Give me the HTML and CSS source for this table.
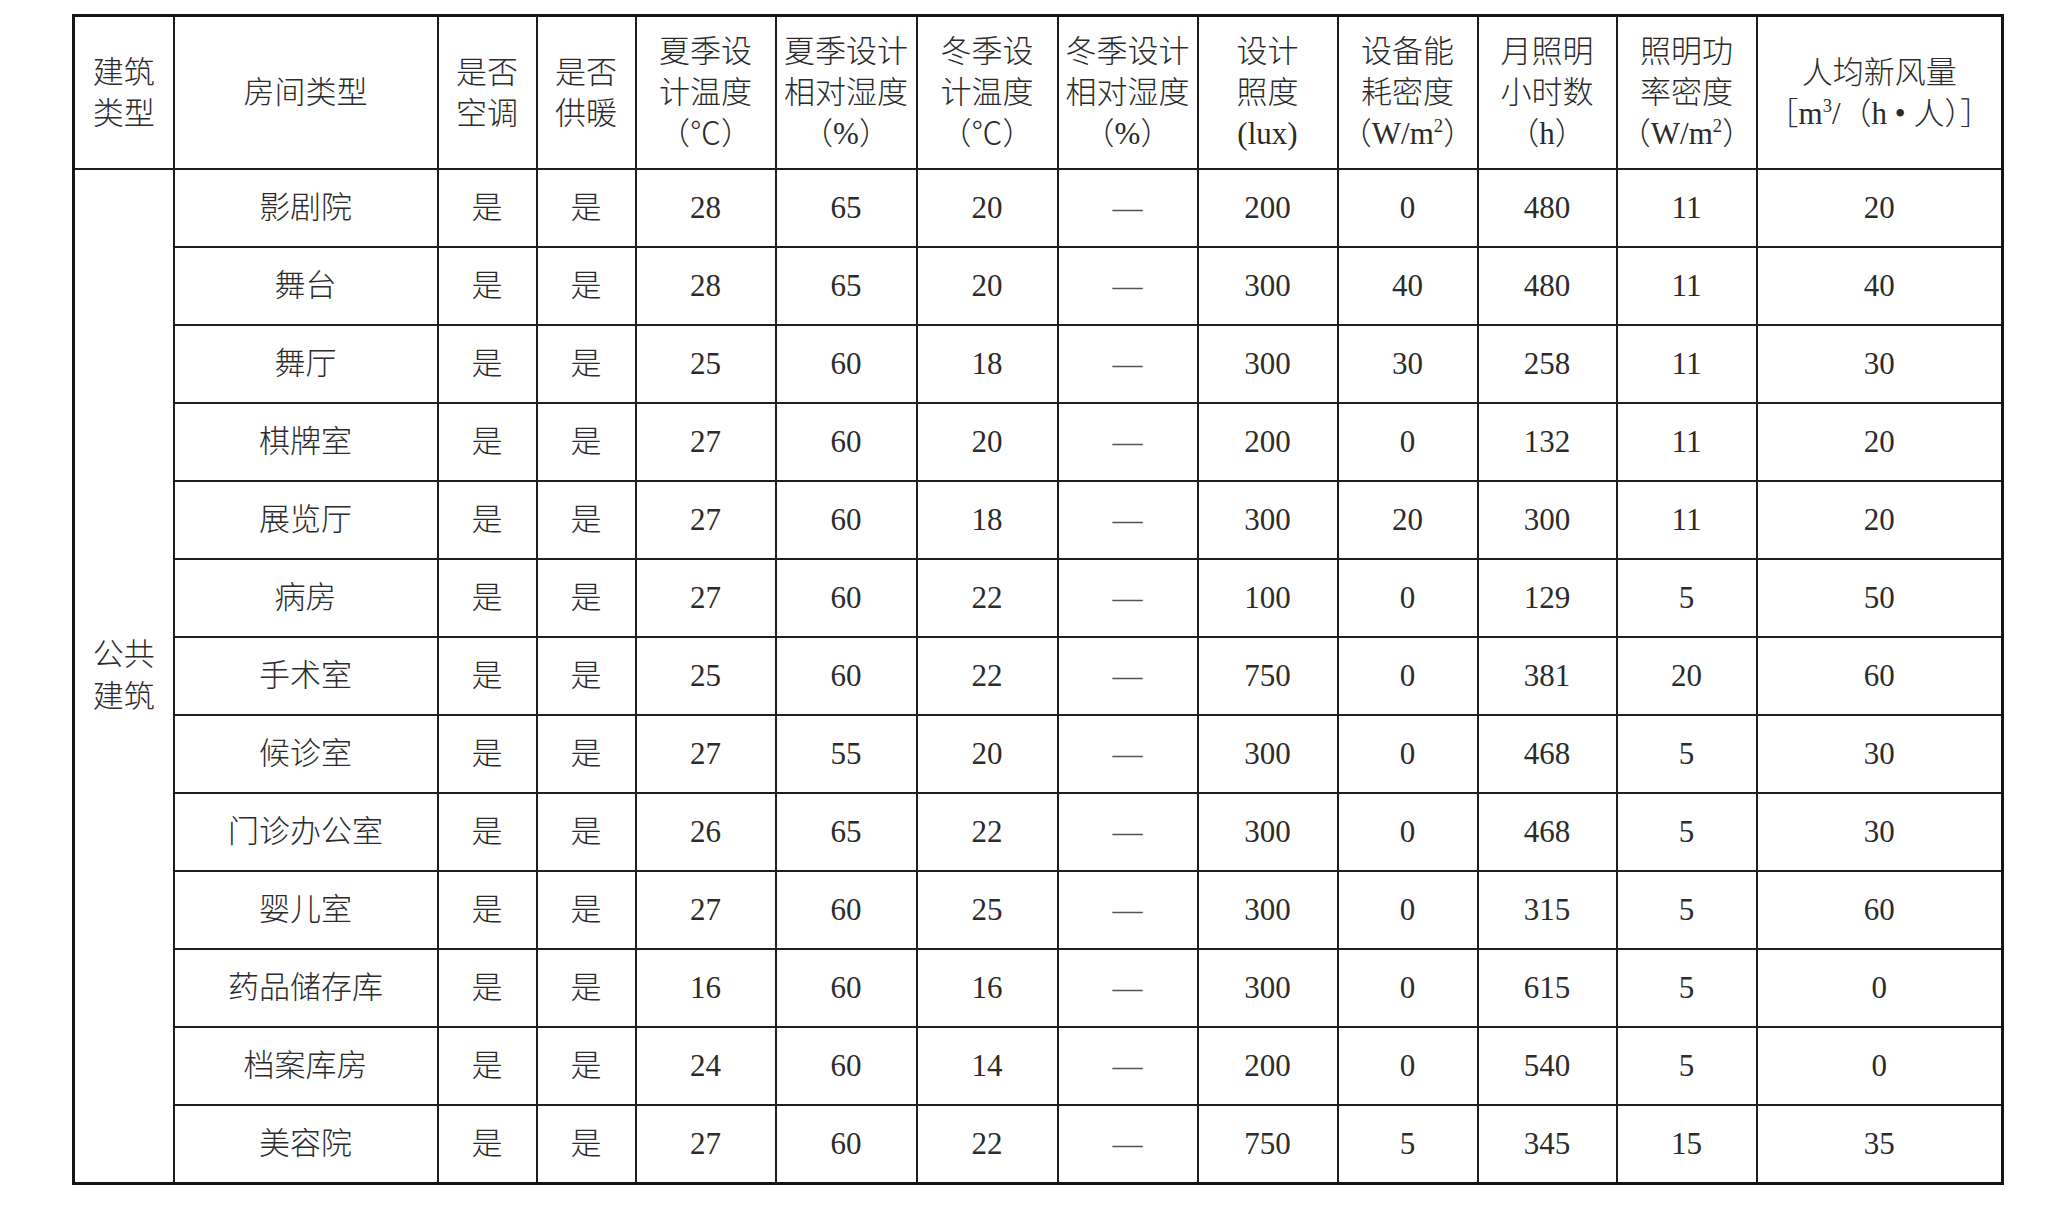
FILE: index.html
```html
<!DOCTYPE html>
<html lang="zh-CN">
<head>
<meta charset="utf-8">
<title>房间参数表</title>
<link rel="stylesheet" href="styles.css">
</head>
<body>
<div class="page">
<table class="grid">
<colgroup>
<col class="c-type"><col class="c-room"><col class="c-yn"><col class="c-yn"><col class="c-n140"><col class="c-n141"><col class="c-n141"><col class="c-n140"><col class="c-n140"><col class="c-n140"><col class="c-n139"><col class="c-n140"><col class="c-air">
</colgroup>
<thead>
<tr class="head">
<th>建筑<br>类型</th>
<th>房间类型</th>
<th>是否<br>空调</th>
<th>是否<br>供暖</th>
<th>夏季设<br>计温度<br>（℃）</th>
<th>夏季设计<br>相对湿度<br>（%）</th>
<th>冬季设<br>计温度<br>（℃）</th>
<th>冬季设计<br>相对湿度<br>（%）</th>
<th>设计<br>照度<br>(lux)</th>
<th>设备能<br>耗密度<br>（W/m<sup>2</sup>）</th>
<th>月照明<br>小时数<br>（h）</th>
<th>照明功<br>率密度<br>（W/m<sup>2</sup>）</th>
<th>人均新风量<br>［m<sup>3</sup>/（h • 人）］</th>
</tr>
</thead>
<tbody>
<tr><td rowspan="13" class="group">公共<br>建筑</td><td>影剧院</td><td>是</td><td>是</td><td>28</td><td>65</td><td>20</td><td class="dash">—</td><td>200</td><td>0</td><td>480</td><td>11</td><td>20</td></tr>
<tr><td>舞台</td><td>是</td><td>是</td><td>28</td><td>65</td><td>20</td><td class="dash">—</td><td>300</td><td>40</td><td>480</td><td>11</td><td>40</td></tr>
<tr><td>舞厅</td><td>是</td><td>是</td><td>25</td><td>60</td><td>18</td><td class="dash">—</td><td>300</td><td>30</td><td>258</td><td>11</td><td>30</td></tr>
<tr><td>棋牌室</td><td>是</td><td>是</td><td>27</td><td>60</td><td>20</td><td class="dash">—</td><td>200</td><td>0</td><td>132</td><td>11</td><td>20</td></tr>
<tr><td>展览厅</td><td>是</td><td>是</td><td>27</td><td>60</td><td>18</td><td class="dash">—</td><td>300</td><td>20</td><td>300</td><td>11</td><td>20</td></tr>
<tr><td>病房</td><td>是</td><td>是</td><td>27</td><td>60</td><td>22</td><td class="dash">—</td><td>100</td><td>0</td><td>129</td><td>5</td><td>50</td></tr>
<tr><td>手术室</td><td>是</td><td>是</td><td>25</td><td>60</td><td>22</td><td class="dash">—</td><td>750</td><td>0</td><td>381</td><td>20</td><td>60</td></tr>
<tr><td>候诊室</td><td>是</td><td>是</td><td>27</td><td>55</td><td>20</td><td class="dash">—</td><td>300</td><td>0</td><td>468</td><td>5</td><td>30</td></tr>
<tr><td>门诊办公室</td><td>是</td><td>是</td><td>26</td><td>65</td><td>22</td><td class="dash">—</td><td>300</td><td>0</td><td>468</td><td>5</td><td>30</td></tr>
<tr><td>婴儿室</td><td>是</td><td>是</td><td>27</td><td>60</td><td>25</td><td class="dash">—</td><td>300</td><td>0</td><td>315</td><td>5</td><td>60</td></tr>
<tr><td>药品储存库</td><td>是</td><td>是</td><td>16</td><td>60</td><td>16</td><td class="dash">—</td><td>300</td><td>0</td><td>615</td><td>5</td><td>0</td></tr>
<tr><td>档案库房</td><td>是</td><td>是</td><td>24</td><td>60</td><td>14</td><td class="dash">—</td><td>200</td><td>0</td><td>540</td><td>5</td><td>0</td></tr>
<tr><td>美容院</td><td>是</td><td>是</td><td>27</td><td>60</td><td>22</td><td class="dash">—</td><td>750</td><td>5</td><td>345</td><td>15</td><td>35</td></tr>
</tbody>
</table>
</div>
</body>
</html>
```

FILE: styles.css
```css
html, body {
  margin: 0;
  padding: 0;
  background: #ffffff;
}

.page {
  padding: 14px 0 0 72px;
}

.grid {
  border-collapse: collapse;
  table-layout: fixed;
  width: 1932px;
  border: 3px solid #151515;
  font-family: "Liberation Serif", "Noto Sans CJK SC", serif;
  color: #2b2b2b;
  font-weight: 300;
}

.c-type { width: 100px; }
.c-room { width: 264px; }
.c-yn { width: 99px; }
.c-n139 { width: 139px; }
.c-n140 { width: 140px; }
.c-n141 { width: 141px; }
.c-air { width: 246px; }

.grid th,
.grid td {
  border: 2px solid #1e1e1e;
  text-align: center;
  vertical-align: middle;
  padding: 0;
  white-space: nowrap;
}

.grid th {
  font-weight: 300;
  font-size: 31px;
  line-height: 41px;
  height: 151px;
  letter-spacing: 0;
}

.grid td {
  font-size: 31px;
  line-height: 40px;
  height: 76px;
}

.grid td.group {
  line-height: 42px;
}

.grid td.dash {
  color: #555555;
  font-size: 30px;
}

.grid sup {
  font-size: 0.6em;
  line-height: 0;
  vertical-align: 0.65em;
}
```
